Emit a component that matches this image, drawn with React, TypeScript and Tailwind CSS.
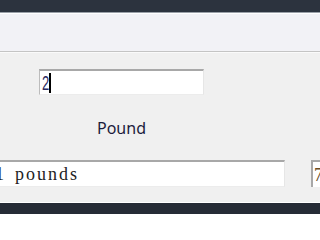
import React from "react";

export default function App() {
  return (
    <div className="w-[320px] h-[214px] overflow-hidden flex flex-col bg-[#f0f0f0]">
      <div className="h-[12px] shrink-0 bg-[#2c333e]" />
      <div className="h-[1px] shrink-0 bg-[#9aa0a8]" />
      <div className="h-[1px] shrink-0 bg-white" />
      <div className="h-[38px] shrink-0 bg-[#f2f2f6] border-b border-[#c4c4c4]" />
      <div className="h-[1px] shrink-0 bg-[#fafafa]" />
      <div className="flex-1 flex flex-col">
        <div className="mt-[16px] ml-[39px] w-[165px] h-[26px] shrink-0 bg-white border-t-2 border-l border-t-[#a8a8a8] border-l-[#bcbcbc] border-r border-b border-r-[#e6e6e6] border-b-[#ececec] flex items-center pl-[2px]">
          <span className="inline-block origin-left scale-x-[0.62] text-[21px] leading-none text-[#2a2a60] [font-family:'Liberation_Sans',sans-serif]">2</span>
          <span className="block w-[2px] h-[20px] bg-black -ml-[5px]" />
        </div>
        <div className="mt-[25px] w-[243px] text-center text-[16px] leading-none text-[#1c1c3c] [font-family:'Noto_Sans',sans-serif]">
          Pound
        </div>
        <div className="mt-[24px] flex items-start">
          <div className="w-[285px] h-[27px] shrink-0 bg-white border-t-2 border-t-[#a8a8a8] border-r border-b border-r-[#e6e6e6] border-b-[#ececec] flex items-center overflow-hidden text-[18px] leading-none text-[#222] [font-family:'Liberation_Serif',serif]">
            <span className="-ml-[5px] w-[20px] shrink-0">1</span>
            <span className="tracking-[2px] whitespace-pre">pounds</span>
          </div>
          <div className="ml-[26px] w-[20px] h-[27px] shrink-0 bg-white border-t-2 border-l-2 border-t-[#a8a8a8] border-l-[#a8a8a8] flex items-center pl-[1px] overflow-hidden">
            <span className="text-[18px] leading-none text-[#6a4a20] [font-family:'Liberation_Serif',serif]">7</span>
          </div>
        </div>
      </div>
      <div className="h-[1px] shrink-0 bg-white" />
      <div className="h-[11px] shrink-0 bg-[#262c36]" />
    </div>
  );
}
